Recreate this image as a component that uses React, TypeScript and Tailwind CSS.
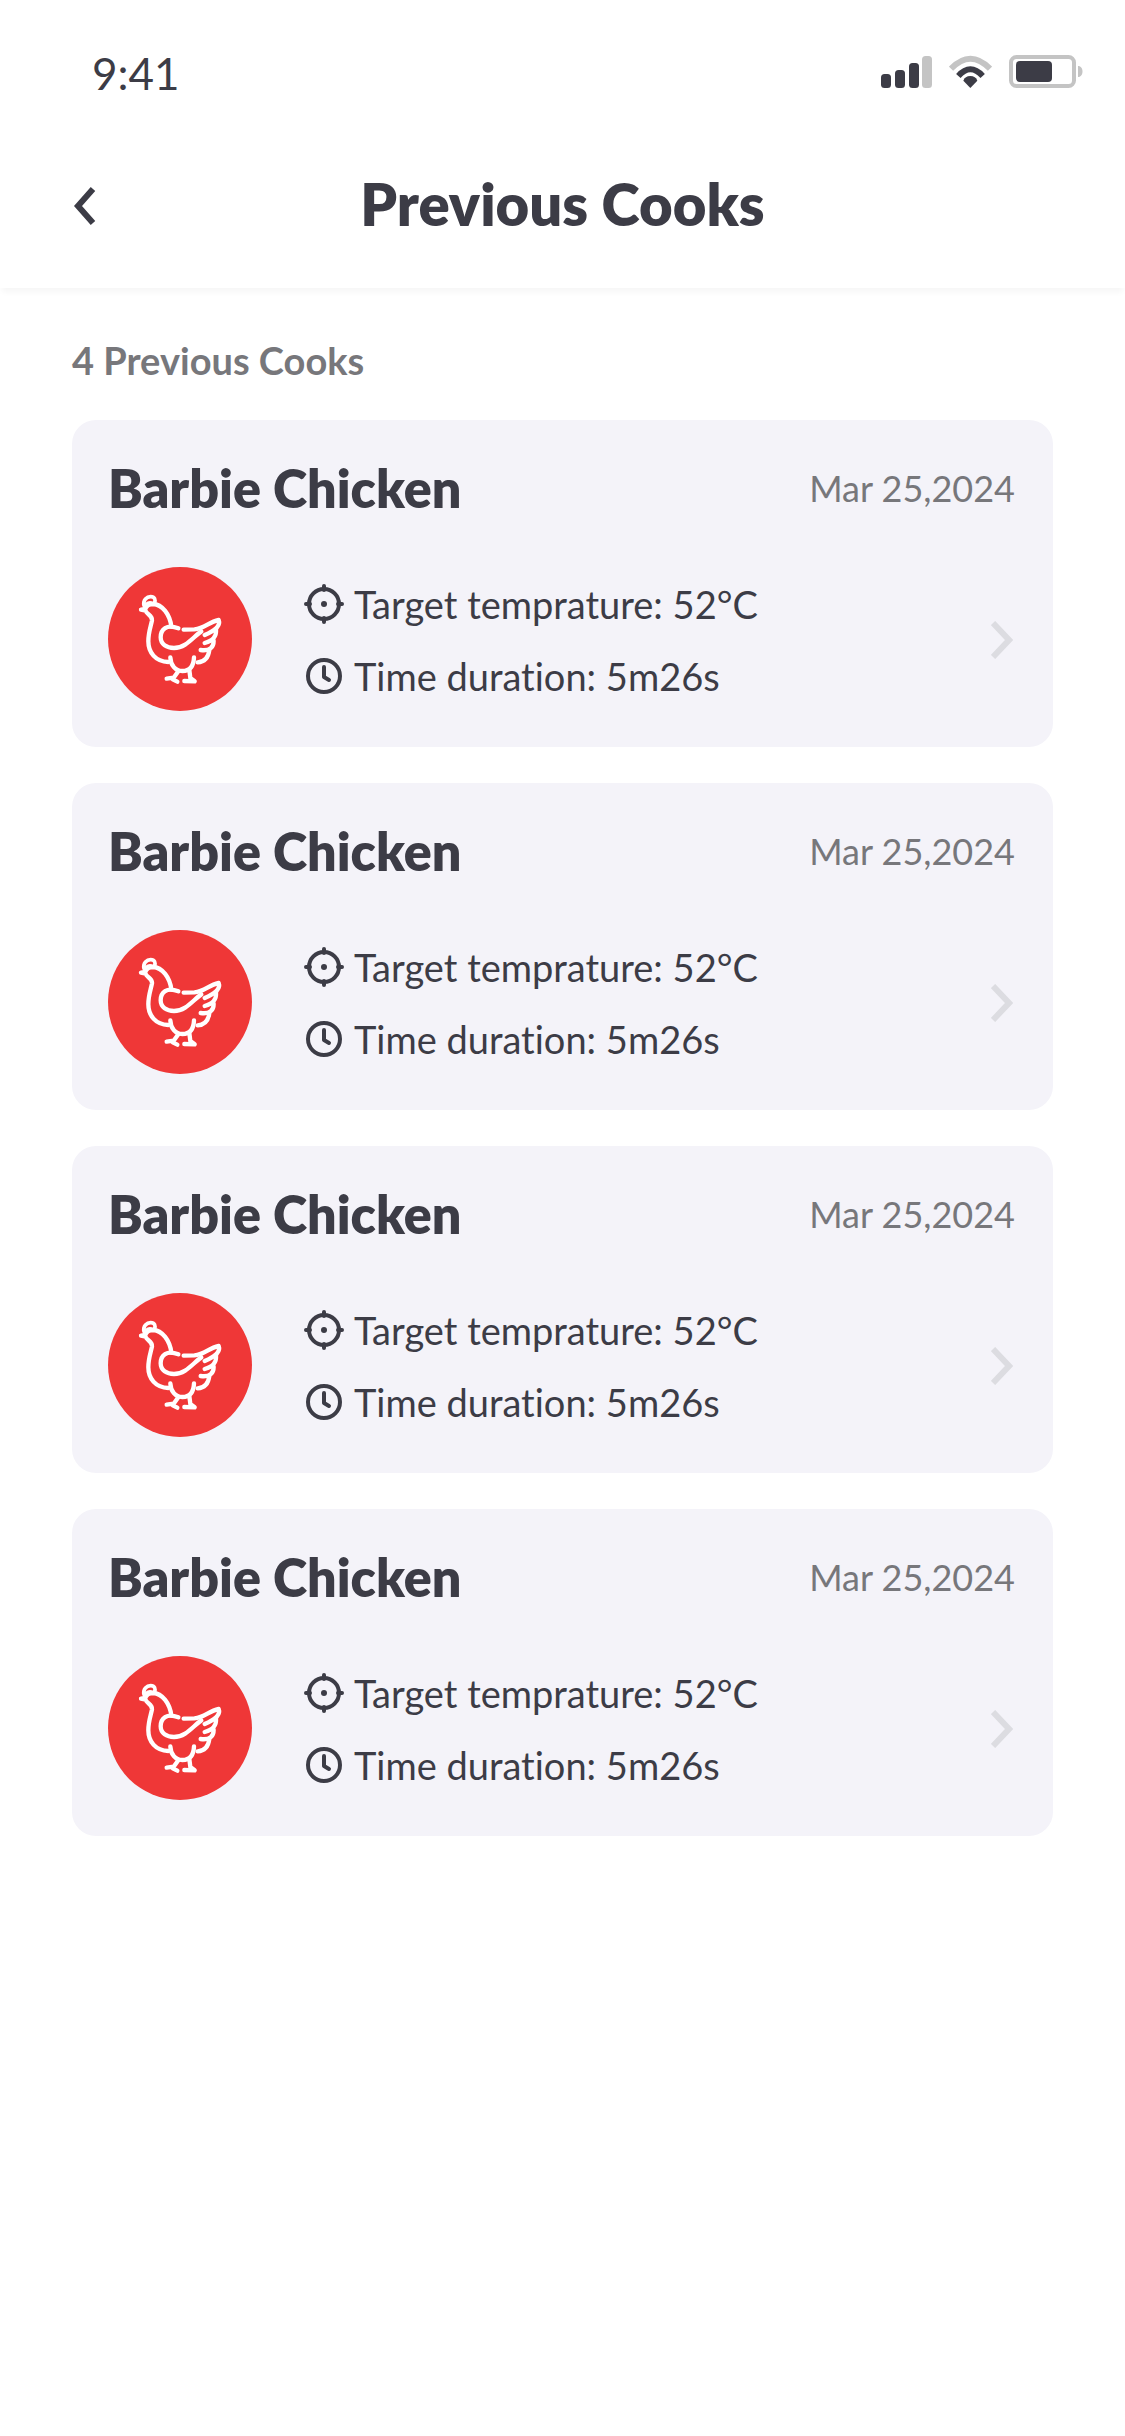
import React from 'react';

interface Cook {
  id: number;
  name: string;
  date: string;
  temperature: string;
  duration: string;
}

const cooks: Cook[] = [
  { id: 1, name: 'Barbie Chicken', date: 'Mar 25,2024', temperature: '52°C', duration: '5m26s' },
  { id: 2, name: 'Barbie Chicken', date: 'Mar 25,2024', temperature: '52°C', duration: '5m26s' },
  { id: 3, name: 'Barbie Chicken', date: 'Mar 25,2024', temperature: '52°C', duration: '5m26s' },
  { id: 4, name: 'Barbie Chicken', date: 'Mar 25,2024', temperature: '52°C', duration: '5m26s' },
];

const SignalIcon = () => (
  <svg viewBox="0 0 51 33" className="w-[51px] h-[33px]" aria-hidden="true">
    <rect x="0" y="19" width="10" height="14" rx="3.5" fill="#3c3c46" />
    <rect x="14" y="15" width="10" height="18" rx="3.5" fill="#3c3c46" />
    <rect x="28" y="8" width="10" height="25" rx="3.5" fill="#3c3c46" />
    <rect x="41" y="1" width="10" height="32" rx="3.5" fill="#c4c4c4" />
  </svg>
);

const WifiIcon = () => (
  <svg viewBox="270 42 129 99" className="w-[43px] h-[33px]" aria-hidden="true">
    <g fill="none" strokeWidth="18">
      <path d="M276 83 Q334 23 393 83" stroke="#c4c4c4" />
      <path d="M298 105 Q334 65 371 105" stroke="#3c3c46" />
    </g>
    <path d="M313 119 Q318 105 334 105 Q350 105 355 119 L334 141 Z" fill="#3c3c46" />
  </svg>
);

const BatteryIcon = () => (
  <svg viewBox="0 0 74 33" className="w-[74px] h-[33px]" aria-hidden="true">
    <rect x="2" y="2" width="63" height="29" rx="5.5" fill="none" stroke="#c4c4c4" strokeWidth="4" />
    <rect x="7" y="6" width="36" height="21" rx="4" fill="#3c3c46" />
    <path d="M69 11 C75 11 75 22 69 22 Z" fill="#c4c4c4" />
  </svg>
);

const ChickenIcon = () => (
  <svg viewBox="24 20 432 432" className="w-36 h-36 shrink-0" aria-hidden="true">
    <circle cx="240" cy="236" r="216" fill="#ef3737" />
    <g fill="none" stroke="#fff" strokeWidth="13" strokeLinecap="round" strokeLinejoin="round">
      {/* head, neck and belly */}
      <path d="M132 136 C128 119 141 109 152 109 C164 109 168 119 163 128" strokeWidth="11" />
      <path d="M138 131 C144 126 153 125 159 129" strokeWidth="8" />
      <path d="M214 199 C210 163 187 132 159 131 C148 131 139 136 136 146 L123 148 L137 151 C138 161 158 165 156 180 C152 200 145 216 145 243 C145 276 166 304 205 305" />
      {/* wing and tail */}
      <path d="M235 204 C200 190 182 207 182 231 C182 252 200 263 222 263 C258 263 280 229 304 213" />
      <path d="M251 208 L283 207 C315 205 325 185 356 179 C364 200 333 216 314 224" />
      <path d="M348 207 C350 230 338 241 314 248" />
      <path d="M341 241 C341 260 331 273 302 269" />
      <path d="M328 269 C325 293 313 305 293 306" />
      {/* legs */}
      <path d="M211 291 C212 315 226 332 247 332 C269 332 281 318 282 291" />
      <path d="M235 333 L221 352 L200 355" />
      <path d="M218 357 L232 364" />
      <path d="M268 329 L271 353 L284 363 L253 362" />
    </g>
  </svg>
);

const TargetIcon = () => (
  <svg viewBox="0 0 40 40" className="w-10 h-10 shrink-0" fill="none" stroke="#3c3c46" strokeWidth="4" strokeLinecap="round" aria-hidden="true">
    <circle cx="20" cy="20" r="15" />
    <path d="M20 2v4M20 34v4M2 20h4M34 20h4" />
    <circle cx="20" cy="20" r="3" fill="#3c3c46" stroke="none" />
  </svg>
);

const ClockIcon = () => (
  <svg viewBox="0 0 40 40" className="w-10 h-10 shrink-0" fill="none" stroke="#3c3c46" strokeWidth="4" strokeLinecap="round" strokeLinejoin="round" aria-hidden="true">
    <circle cx="20" cy="20" r="16" />
    <path d="M20 11v10l5 3" />
  </svg>
);

const CookCard = ({ cook }: { cook: Cook }) => {
  return (
    <li>
      <a href={`#cook-${cook.id}`} className="block bg-[#f4f3f9] rounded-3xl px-9 pt-[34px] pb-9">
        <div className="flex items-center justify-between">
          <h2 className="text-[52px] leading-[68px] font-extrabold">{cook.name}</h2>
          <span className="text-[36px] leading-[68px] text-[#77777b] pr-0.5">{cook.date}</span>
        </div>
        <div className="flex items-center mt-[45px]">
          <ChickenIcon />
          <div className="ml-[52px] mt-0.5 flex flex-col gap-6">
            <div className="flex items-center gap-2.5">
              <TargetIcon />
              <span className="text-[38px] leading-[48px]">Target temprature: {cook.temperature}</span>
            </div>
            <div className="flex items-center gap-2.5">
              <ClockIcon />
              <span className="text-[38px] leading-[48px]">Time duration: {cook.duration}</span>
            </div>
          </div>
          <svg viewBox="0 0 22 38" className="w-[22px] h-[38px] ml-auto mr-1 mt-0.5" fill="none" stroke="#dcdce1" strokeWidth="6" aria-hidden="true">
            <path d="M2 2l16 17-16 17" />
          </svg>
        </div>
      </a>
    </li>
  );
};

const App = () => {
  return (
    <div className="min-h-screen bg-white text-[#3c3c46] font-['Lato','Noto_Sans',sans-serif] [font-variant-ligatures:none]">
      {/* Status bar */}
      <div className="flex items-center justify-between h-[142px] pl-[92px] pr-[42px]">
        <span className="text-[44px] leading-[52px] pt-1">9:41</span>
        <div className="flex items-center gap-[17px]">
          <SignalIcon />
          <WifiIcon />
          <BatteryIcon />
        </div>
      </div>

      {/* Header */}
      <header className="grid grid-cols-[1fr_auto_1fr] items-start h-[146px] px-[72px] pt-6 shadow-[0_6px_6px_-2px_rgba(0,0,0,0.04)]">
        <button type="button" aria-label="Back" className="flex items-center w-12 h-20">
          <svg viewBox="0 0 24 38" className="w-6 h-[38px]" fill="none" stroke="#3c3c46" strokeWidth="6" aria-hidden="true">
            <path d="M21 2L6 19l15 17" />
          </svg>
        </button>
        <h1 className="text-[58px] leading-[76px] font-extrabold">Previous Cooks</h1>
      </header>

      <main className="px-[72px] pt-12">
        <p className="text-[38px] leading-[48px] font-bold text-[#77777b]">{cooks.length} Previous Cooks</p>
        <ul className="flex flex-col gap-9 mt-9">
          {cooks.map((cook) => (
            <CookCard key={cook.id} cook={cook} />
          ))}
        </ul>
      </main>
    </div>
  );
};

export default App;
